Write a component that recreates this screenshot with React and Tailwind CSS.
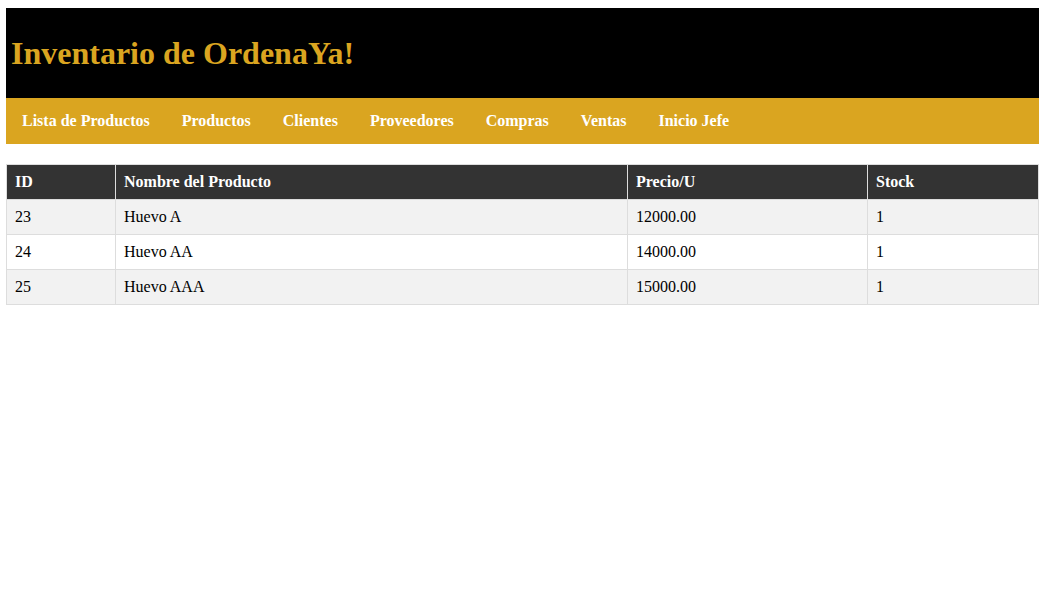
export default function App() {
  const links = ["Lista de Productos", "Productos", "Clientes", "Proveedores", "Compras", "Ventas", "Inicio Jefe"];
  const rows = [
    ["23", "Huevo A", "12000.00", "1"],
    ["24", "Huevo AA", "14000.00", "1"],
    ["25", "Huevo AAA", "15000.00", "1"],
  ];
  const widths = ["w-[109px]", "w-[512px]", "w-[240px]", ""];
  return (
    <div className="min-h-[600px] bg-white px-[6px] pt-[8px] text-black" style={{ fontFamily: '"Liberation Serif", "Times New Roman", serif' }}>
      <header className="flex h-[90px] items-center bg-black pl-[5px]">
        <h1 className="text-[32px] font-bold text-[#daa520]">Inventario de OrdenaYa!</h1>
      </header>
      <nav className="flex h-[46px] items-center bg-[#daa520]">
        {links.map((l) => (
          <a key={l} className="px-4 text-[16px] font-bold text-white">{l}</a>
        ))}
      </nav>
      <table className="mt-[20px] w-full table-fixed border-collapse text-[16px]">
        <thead>
          <tr className="bg-[#333333] text-white">
            {["ID", "Nombre del Producto", "Precio/U", "Stock"].map((h, i) => (
              <th key={h} className={`${widths[i]} border border-[#dddddd] px-2 py-2 text-left font-bold leading-[18px]`}>{h}</th>
            ))}
          </tr>
        </thead>
        <tbody>
          {rows.map((r, ri) => (
            <tr key={ri} className={ri % 2 === 0 ? "bg-[#f2f2f2]" : "bg-white"}>
              {r.map((c, ci) => (
                <td key={ci} className="border border-[#dddddd] px-2 py-2 leading-[18px]">{c}</td>
              ))}
            </tr>
          ))}
        </tbody>
      </table>
    </div>
  );
}
